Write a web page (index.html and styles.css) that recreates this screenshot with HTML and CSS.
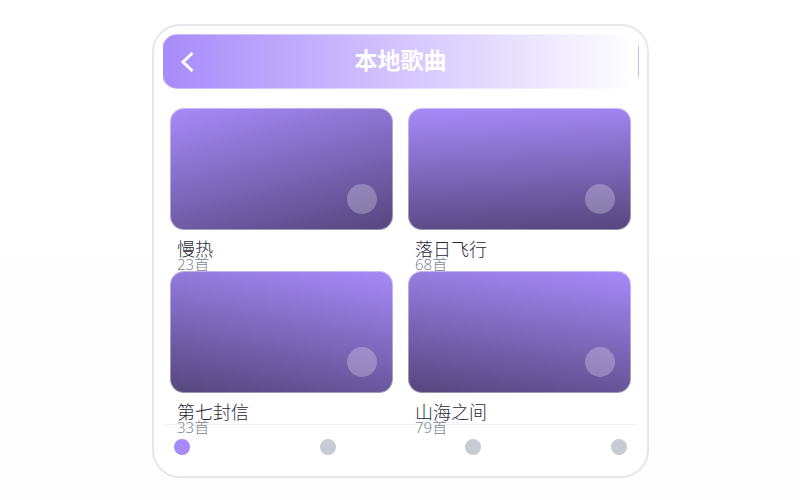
FILE: index.html
```html
<!DOCTYPE html>
<html lang="zh-CN">
  <head>
    <meta charset="UTF-8" />
    <meta name="viewport" content="width=device-width, initial-scale=1.0" />
    <title>本地歌曲</title>
    <link rel="stylesheet" href="styles.css" />
  </head>
  <body>
    <div class="phone">
      <header class="header">
        <button class="back" type="button" aria-label="返回">
          <svg viewBox="0 0 14 22" width="14" height="22">
            <path d="M12.5 2 L3 11 L12.5 20" />
          </svg>
        </button>
        <h1 class="title">本地歌曲</h1>
      </header>

      <!-- 歌单 -->
      <main class="grid">
        <article class="card">
          <div class="cover cover-a">
            <button class="play" type="button" aria-label="播放慢热"></button>
          </div>
          <h2 class="name">慢热</h2>
          <p class="count">23首</p>
        </article>
        <article class="card">
          <div class="cover cover-b">
            <button class="play" type="button" aria-label="播放落日飞行"></button>
          </div>
          <h2 class="name">落日飞行</h2>
          <p class="count">68首</p>
        </article>
        <article class="card">
          <div class="cover cover-c">
            <button class="play" type="button" aria-label="播放第七封信"></button>
          </div>
          <h2 class="name">第七封信</h2>
          <p class="count">33首</p>
        </article>
        <article class="card">
          <div class="cover cover-d">
            <button class="play" type="button" aria-label="播放山海之间"></button>
          </div>
          <h2 class="name">山海之间</h2>
          <p class="count">79首</p>
        </article>
      </main>

      <!-- 底部导航 -->
      <nav class="tabbar">
        <button class="tab active" type="button" aria-label="歌曲"></button>
        <button class="tab" type="button" aria-label="发现"></button>
        <button class="tab" type="button" aria-label="收藏"></button>
        <button class="tab" type="button" aria-label="我的"></button>
      </nav>
    </div>
  </body>
</html>
```
FILE: styles.css
```css
* {
  box-sizing: border-box;
}

body {
  margin: 0;
  padding: 24px 151px 23px 152px;
  min-height: 100vh;
  background: linear-gradient(#ffffff 50%, #fdfdfd 52%);
  font-family: "Noto Sans", "Noto Sans CJK SC", sans-serif;
  font-weight: 300;
  color: #1f2937;
}

button {
  padding: 0;
  border: none;
  cursor: pointer;
}

.phone {
  padding: 8px;
  border: 2px solid #e5e7eb;
  border-radius: 28px;
  background: #ffffff;
}

/* 顶部栏 */
.header {
  display: grid;
  grid-template-columns: 24px 1fr 24px;
  align-items: center;
  height: 55px;
  padding: 0 17px;
  border: 1px solid rgba(255, 255, 255, 0.4);
  border-radius: 15px;
  background: linear-gradient(90deg, #a78bfa, #ffffff);
  color: #ffffff;
}

.back {
  display: flex;
  background: none;
}

.back svg {
  fill: none;
  stroke: #ffffff;
  stroke-width: 3;
}

.title {
  margin: 0;
  padding-bottom: 4px;
  font-size: 23px;
  line-height: 32px;
  font-weight: 700;
  text-align: center;
}

/* 歌单网格 */
.grid {
  display: grid;
  grid-template-columns: 1fr 1fr;
  grid-auto-rows: 147px;
  gap: 16px 15px;
  padding: 19px 8px 6px;
}

.cover {
  display: flex;
  justify-content: flex-end;
  align-items: flex-end;
  height: 122px;
  padding: 15px;
  border: 1px solid rgba(255, 255, 255, 0.4);
  border-radius: 14px;
}

.cover-a {
  background: linear-gradient(166deg, #a78bfa, #54467d) border-box;
}

.cover-b {
  background: linear-gradient(177deg, #a78bfa, #54467d) border-box;
}

.cover-c {
  background: linear-gradient(190deg, #a78bfa, #54467d) border-box;
}

.cover-d {
  background: linear-gradient(188deg, #a78bfa, #54467d) border-box;
}

.play {
  width: 30px;
  height: 30px;
  border-radius: 50%;
  background: rgba(255, 255, 255, 0.26);
}

.name {
  margin: 10px 7px 0;
  font-size: 18px;
  line-height: 18px;
  font-weight: 300;
}

.count {
  margin: 0 7px;
  font-size: 15px;
  line-height: 13px;
  color: #7d8592;
}

/* 底部导航 */
.tabbar {
  display: flex;
  justify-content: space-between;
  margin: 0 2px;
  padding: 14px 10px 13px;
  border-top: 1px solid #f0f1f3;
}

.tab {
  width: 16px;
  height: 16px;
  border-radius: 50%;
  background: #c7cbd3;
}

.tab.active {
  background: #a78bfa;
}
```
